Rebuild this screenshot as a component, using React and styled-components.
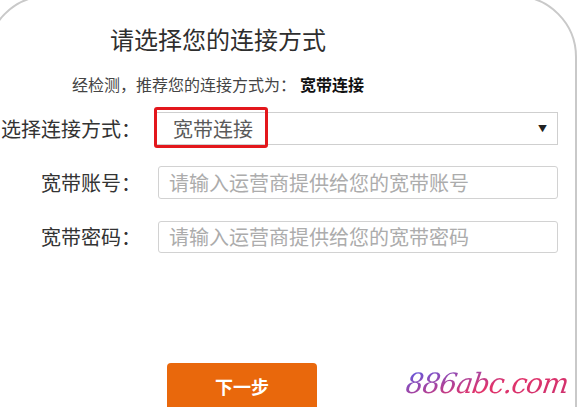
import React from "react";
import styled, { createGlobalStyle } from "styled-components";

const GlobalStyle = createGlobalStyle`
  html, body {
    margin: 0;
    padding: 0;
    background: #fff;
    overflow: hidden;
  }
  body {
    font-family: "Noto Sans CJK SC", "Liberation Sans", sans-serif;
    color: #333;
  }
`;

const Page = styled.div`
  position: relative;
  width: 578px;
  height: 407px;
  overflow: hidden;
`;

const Panel = styled.div`
  box-sizing: border-box;
  width: 591px;
  height: 520px;
  margin: -5px 0 0 -14px;
  padding: 27px 0 0 13px;
  border: 2px solid #c9c9c9;
  border-radius: 62px;
`;

const Heading = styled.div`
  width: 434px;
  text-align: center;
`;

const Title = styled.h1`
  margin: 0;
  font-size: 24px;
  line-height: 30px;
  font-weight: 400;
  color: #2e2e2e;
`;

const Hint = styled.p`
  margin: 20px 0 0;
  font-size: 16px;
  line-height: 20px;
  color: #444;

  b {
    margin-left: 4px;
    color: #111;
    font-weight: 700;
  }
`;

// full-width punctuation box, so commas and colons keep their em width
const Punct = styled.span`
  display: inline-block;
  width: 1em;
  text-align: ${p => (p.$left ? "left" : "center")};
`;

const Form = styled.div`
  display: grid;
  grid-template-columns: 140px auto;
  grid-auto-rows: 33px;
  row-gap: 21px;
  margin-top: 18px;
  align-items: center;
`;

const Label = styled.label`
  font-size: 20px;
  line-height: 33px;
  color: #333;
  text-align: right;
  white-space: nowrap;
`;

const SelectBox = styled.div`
  position: relative;
  box-sizing: border-box;
  width: 404px;
  height: 33px;
  margin-left: 13px;
  padding: 0 10px 0 18px;
  display: flex;
  align-items: center;
  justify-content: space-between;
  border: 1px solid #cfcfcf;
  font-size: 20px;
  color: #5a5a5a;
`;

const Arrow = styled.span`
  font-size: 9px;
  color: #222;
`;

const Highlight = styled.span`
  position: absolute;
  left: -1px;
  top: -6px;
  width: 114px;
  height: 41px;
  box-sizing: border-box;
  border: 3px solid #e3171c;
  border-radius: 3px;
`;

const Input = styled.input`
  box-sizing: border-box;
  width: 400px;
  height: ${p => p.$h}px;
  margin-left: 17px;
  padding: 0 10px;
  border: 1px solid #d2d2d2;
  border-radius: 3px;
  font-family: "Noto Sans CJK SC", sans-serif;
  font-size: 20px;
  outline: none;

  &::placeholder {
    color: #acacac;
  }
`;

const Button = styled.button`
  display: block;
  width: 150px;
  height: 50px;
  margin: 110px 0 0 166px;
  padding: 0 0 4px;
  border: none;
  border-radius: 4px;
  background: #e9680c;
  color: #fff;
  font-family: "Noto Sans CJK SC", sans-serif;
  font-size: 18px;
  font-weight: 700;
  text-align: center;
`;

const Watermark = styled.span`
  position: absolute;
  left: 406px;
  top: 366px;
  font-family: "DejaVu Serif", serif;
  font-style: italic;
  font-size: 28px;
  line-height: 36px;
  letter-spacing: -1px;
  transform: skewX(-8deg);
  background: linear-gradient(160deg, #6b55d6 10%, #e2336a 55%, #c9306f 100%);
  -webkit-background-clip: text;
  background-clip: text;
  color: transparent;
`;

export default function App() {
  return (
    <Page>
      <GlobalStyle />
      <Panel>
        <Heading>
          <Title>请选择您的连接方式</Title>
          <Hint>
            经检测<Punct $left>，</Punct>推荐您的连接方式为<Punct>：</Punct>
            <b>宽带连接</b>
          </Hint>
        </Heading>
        <Form>
          <Label>选择连接方式<Punct>：</Punct></Label>
          <SelectBox>
            <span>宽带连接</span>
            <Arrow>▼</Arrow>
            <Highlight />
          </SelectBox>
          <Label>宽带账号<Punct>：</Punct></Label>
          <Input $h={33} placeholder="请输入运营商提供给您的宽带账号" />
          <Label>宽带密码<Punct>：</Punct></Label>
          <Input $h={32} type="password" placeholder="请输入运营商提供给您的宽带密码" />
        </Form>
        <Button>下一步</Button>
      </Panel>
      <Watermark>886abc.com</Watermark>
    </Page>
  );
}
